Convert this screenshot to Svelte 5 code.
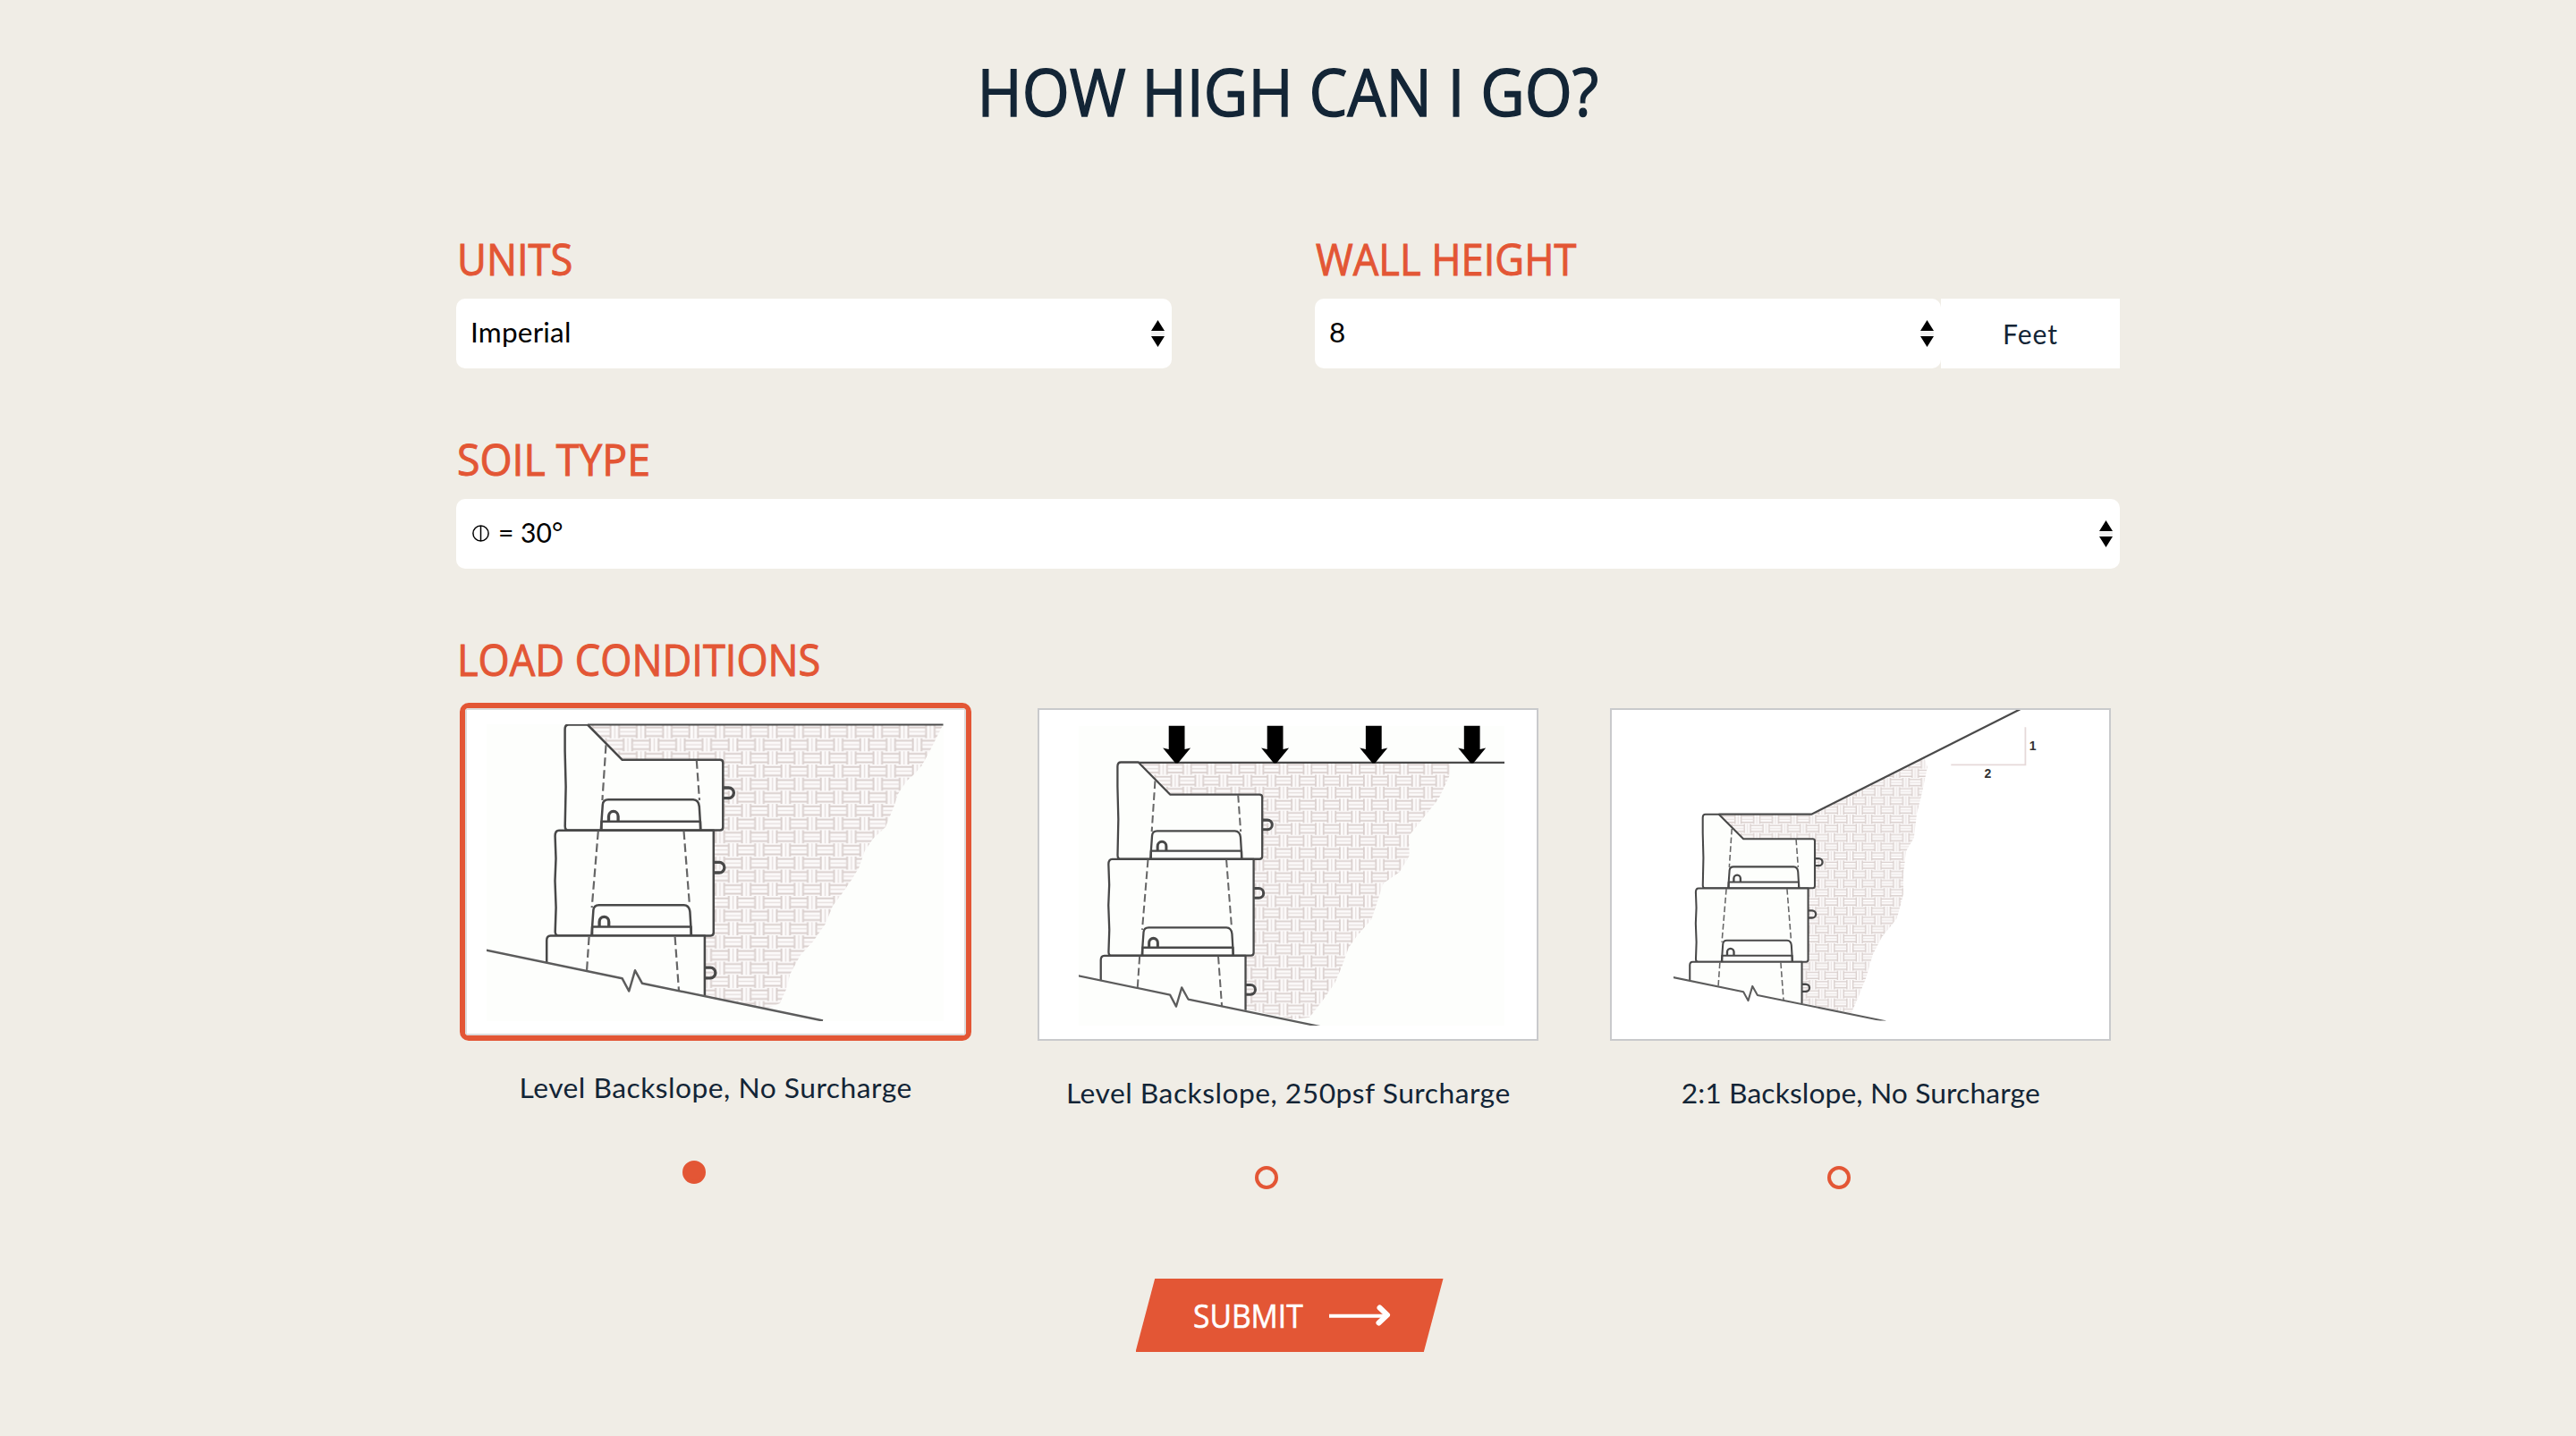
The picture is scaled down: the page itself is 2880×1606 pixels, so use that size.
<script>
  let load = $state('level');

  // Each diagram places the same wall with its own scale, frame and backfill outline.
  const options = [
    {
      id: 'level',
      label: 'Level Backslope, No Surcharge',
      paper: { x: 44, y: 40, w: 511, h: 332 },
      wall: 'matrix(1 0 0 1 0 0)',
      surface: 'M157 40.5H554.5',
      soil: '157,41 554,41 548,53 538.5,72 530,87 522,96 514,103 504,118 499,133 490,155 476,168 466.6,182 460.6,200 452.7,213 441,230 431,243 423,263 409,283 395,298 383,320 379.6,335 372,352 358,358 280,342',
      arrows: [],
      slope: false
    },
    {
      id: 'surcharge',
      label: 'Level Backslope, 250psf Surcharge',
      paper: { x: 66, y: 42, w: 476, h: 335 },
      wall: 'matrix(.9157 0 0 .9165 -11.1 45.4)',
      surface: 'M132.7 82.8H542',
      soil: '132.9,83 481.6,83 480.8,97 468.6,123 452.7,143 435,165 435.7,187 425,205 406.5,218 399.4,240 393.4,258 377.6,276 367.7,290 360.6,310 352,330 338,350 324,367.7 306,370 245,357',
      arrows: [175.6, 285.6, 395.8, 505.7],
      slope: false
    },
    {
      id: 'backslope',
      label: '2:1 Backslope, No Surcharge',
      paper: { x: 91, y: 23, w: 440, h: 348.5 },
      wall: 'matrix(.709 0 0 .699 30.4 112.5)',
      surface: 'M141.7 140.7H245.2L478.5 23.3',
      soil: '142.3,140.7 245.2,140.7 371.7,77.5 374.8,88 369.7,113 363,140 359.8,167 351,182 348,207 348,230 340.8,257 324,278 314,297 306.4,323 298.5,343 289.8,363 230,351',
      arrows: [],
      slope: true
    }
  ];
</script>

{#snippet spinner()}
  <svg class="spinner" viewBox="0 0 15 30" aria-hidden="true">
    <path class="groove" d="M0 12.5H15V17.5H0z" />
    <path d="M7.5 0L15 12H0z M7.5 30L15 18H0z" />
  </svg>
{/snippet}

{#snippet channel()}
  <path d="M171.8 158.3L173.8 130Q174.3 124.3 180 124.3H275Q281 124.5 281.8 132L283.4 158.3" />
  <path d="M172.5 158V148.7H283V158" />
  <path class="loop" d="M180.5 148.5V143a5.3 5.6 0 0 1 10.6 0V148.5" />
{/snippet}

{#snippet hook(x, y)}
  <path class="loop" d="M{x} {y - 5.8}h5.6a5.8 5.8 0 0 1 0 11.6h-5.6" />
{/snippet}

{#snippet diagram(o)}
  <svg
    class="diagram"
    viewBox="20 22 560 {load === o.id ? 366 : 372}"
    role="img"
    aria-label={o.label}
  >
    <defs>
      <pattern
        id="weave-{o.id}"
        width="29.4"
        height="29.4"
        patternUnits="userSpaceOnUse"
        patternTransform="{o.wall} translate(209.3 40.9)"
      >
        <path
          class="weave"
          d="M2.6 0V14.7M12.2 0V14.7 M17.3 14.7V29.4M26.9 14.7V29.4
             M12.5 2.6H29.4M12.5 12.2H29.4 M0 2.6H2.3M0 12.2H2.3
             M0 17.3H17M0 26.9H17 M27 17.3H29.4M27 26.9H29.4"
        />
        <path
          class="weave core"
          d="M7.4 0V14.7M22.1 14.7V29.4 M12.5 7.4H29.4M0 7.4H2.3 M0 22.1H17M27 22.1H29.4"
        />
      </pattern>
      <clipPath id="paper-{o.id}">
        <rect x={o.paper.x} y={o.paper.y} width={o.paper.w} height={o.paper.h} />
      </clipPath>
    </defs>

    <rect class="sheet" x="20" y="22" width="560" height="372" />
    {#if !o.slope}
      <rect class="paper" x={o.paper.x} y={o.paper.y} width={o.paper.w} height={o.paper.h} />
    {/if}
    <polygon class="tint" points={o.soil} />
    <polygon points={o.soil} fill="url(#weave-{o.id})" />

    <g clip-path="url(#paper-{o.id})">
      <g class="wall" class:small={o.slope} transform={o.wall}>
        <path class="block" d="M135.7 40.5H157L195.7 79.8H305Q308.3 79.8 308.3 83V155Q308.3 158.6 305 158.6H135.5Q131.7 158.6 131.7 154L132.6 110L131.6 70V45.5Q131.7 40.5 135.7 40.5z" />
        <path class="block" d="M125 158.8H297.8V273Q297.8 276.4 294.5 276.4H124.5Q120.7 276.4 120.7 272L121.6 245L120.5 215L121.5 190L120.6 165Q120.7 158.8 125 158.8z" />
        <path class="block" d="M287.9 343V276.6H115.5Q111.2 276.6 111.2 282V306.8" />
        <path class="dash" d="M177.5 63.3L173.4 125M278.8 80.3L282 125M168.8 159.5L161.7 245M264.5 159.5L271 243M158.6 277.5L156 316M254.6 277.5L259 338" />
        {@render channel()}
        <g transform="translate(-10.4 117.9)">{@render channel()}</g>
        {@render hook(309, 116.8)}
        {@render hook(298.5, 200.2)}
        {@render hook(288.5, 318)}
        <path class="ground" d="M43.9 292.7L195.7 324.3L203.2 338.5L210 315.3L217.9 329.7L420 371.5" />
      </g>
    </g>
    <path class="surface" d={o.surface} />

    {#each o.arrows as x}
      <path class="arrow" d="M{x - 8.9} 41.7h17.8v26.2l6.6 -1.3L{x + 1.5} 83.5h-3L{x - 15.5} 66.6l6.6 1.3z" />
    {/each}

    {#if o.slope}
      <path class="ratio" d="M401.3 85.3H484.4V43.3" />
      <text x="492.6" y="69.3">1</text>
      <text x="442.4" y="99.6">2</text>
    {/if}
    <rect class="edge" x="21" y="23" width="558" height={load === o.id ? 364 : 370} />
  </svg>
{/snippet}

<main>
  <h1><span>HOW HIGH CAN I GO?</span></h1>

  <form>
    <div class="row">
      <div class="field units">
        <h2>UNITS</h2>
        <div class="select"><span class="value">Imperial</span> {@render spinner()}</div>
      </div>
      <div class="field height">
        <h2>WALL HEIGHT</h2>
        <div class="group">
          <div class="select"><span class="value">8</span> {@render spinner()}</div>
          <div class="unit">Feet</div>
        </div>
      </div>
    </div>

    <div class="field">
      <h2 class="soil-title">SOIL TYPE</h2>
      <div class="select">
        <span class="soil">
          <svg class="phi" viewBox="0 0 19 19" aria-label="phi">
            <circle cx="9.5" cy="9.5" r="8.6" />
            <path d="M9.5 1V18" />
          </svg>
          <span>= 30°</span>
        </span>
        {@render spinner()}
      </div>
    </div>

    <h2>LOAD CONDITIONS</h2>
    <div class="options">
      {#each options as o}
        <label class:selected={load === o.id}>
          <span class="card">{@render diagram(o)}</span>
          <span class="caption {o.id}">{o.label}</span>
          <input type="radio" name="load" value={o.id} bind:group={load} />
        </label>
      {/each}
    </div>

    <button type="button">
      <span>SUBMIT</span>
      <svg class="go" viewBox="0 0 70 26" aria-hidden="true">
        <path class="shaft" d="M0 13.8H62" />
        <path class="tip" d="M56.5 4.5L65 12.6L55.5 21.5" />
      </svg>
    </button>
  </form>
</main>

<style>
  :global(body) {
    background: #f0ede6;
  }

  main {
    box-sizing: border-box;
    min-height: 1606px;
    padding-top: 52px;
    background: #f0ede6;
    color: #132536;
    font: 30px/36px Lato, 'Open Sans', sans-serif;
  }

  h1 {
    margin: 0;
    font: 400 73px/100px 'Open Sans', 'Noto Sans', sans-serif;
    text-align: center;
    -webkit-text-stroke: 1.4px currentColor;
  }

  h1 span {
    display: inline-block;
    transform: scaleX(0.934);
  }

  form {
    width: 1860px;
    margin: 104px auto 0;
  }

  h2 {
    width: max-content;
    margin: 0 0 0 1px;
    color: #e35635;
    font: 400 48.6px/66px 'Open Sans', 'Noto Sans', sans-serif;
    -webkit-text-stroke: 1px currentColor;
    transform: scaleX(0.93);
    transform-origin: left;
  }

  .soil-title {
    transform: scaleX(0.955);
  }

  .row {
    display: flex;
    justify-content: space-between;
  }

  .field {
    margin-bottom: 68px;
  }

  .units {
    width: 800px;
  }

  .height {
    width: 900px;
  }

  .group {
    display: flex;
  }

  .select {
    display: flex;
    flex: 1;
    align-items: center;
    justify-content: space-between;
    box-sizing: border-box;
    height: 78px;
    margin-top: 12px;
    padding: 0 8px 4px 15px;
    border-radius: 10px;
    background: #fff;
    color: #000;
  }

  .value {
    padding-left: 1px;
    transform: scaleX(1.05);
    transform-origin: left;
    letter-spacing: 0.2px;
  }

  .unit {
    width: 200px;
    height: 78px;
    margin-top: 12px;
    background: #fff;
    letter-spacing: 1px;
    line-height: 79px;
    text-align: center;
  }

  .spinner {
    position: relative;
    top: 2px;
    width: 15px;
    height: 30px;
  }

  .groove {
    fill: #f1f1f1;
  }

  .soil {
    display: flex;
    align-items: center;
    gap: 10px;
    padding-left: 3px;
  }

  .phi {
    width: 19px;
    height: 19px;
    margin-top: 3px;
    fill: none;
    stroke: #000;
    stroke-width: 1.5;
  }

  .options {
    display: grid;
    grid-template-columns: repeat(3, 580px);
    gap: 60px;
    margin-top: 16px;
  }

  label {
    display: flex;
    flex-direction: column;
    align-items: center;
    padding-top: 6px;
  }

  .card {
    display: flex;
    box-sizing: border-box;
    width: 560px;
    height: 372px;
  }

  .selected {
    padding-top: 0;
  }

  .selected .card {
    width: 572px;
    height: 378px;
    margin-bottom: -6px;
    border: 6px solid #e35635;
    border-radius: 10px;
    background: #e35635;
  }

  .selected .diagram {
    border-radius: 4px;
  }

  .diagram {
    width: 100%;
    height: 100%;
  }

  .sheet {
    fill: #fff;
  }

  .paper {
    fill: #fdfefc;
  }

  .edge {
    fill: none;
    stroke: #c9cacc;
    stroke-width: 2;
  }

  .selected .edge {
    stroke: #dcdcdc;
  }

  .tint {
    fill: #fcfafa;
  }

  .weave {
    fill: none;
    stroke: #d9cfcd;
    stroke-width: 2;
  }

  .core {
    stroke: #e6dfde;
    stroke-width: 1.5;
  }

  .wall {
    fill: none;
    stroke: #484848;
    stroke-width: 2.5;
    stroke-linejoin: round;
  }

  .small {
    stroke-width: 2.9;
  }

  .block {
    fill: #fdfefc;
  }

  .loop {
    stroke-width: 3.3;
  }

  .dash {
    stroke: #666;
    stroke-width: 2.2;
    stroke-dasharray: 9.5 4.5;
  }

  .ground {
    stroke: #5c5c5c;
  }

  .surface {
    fill: none;
    stroke: #4a4a4a;
    stroke-width: 2.2;
  }

  .arrow {
    fill: #000;
  }

  .ratio {
    fill: none;
    stroke: #e6d9d9;
    stroke-width: 1.8;
  }

  text {
    fill: #333;
    font: 700 14px 'Liberation Sans', sans-serif;
    text-anchor: middle;
  }

  .caption {
    margin-top: 40px;
    white-space: nowrap;
    letter-spacing: 0.45px;
    transform: scaleX(1.06);
  }

  .caption.backslope {
    letter-spacing: 0.1px;
  }

  input {
    appearance: none;
    box-sizing: border-box;
    width: 26px;
    height: 26px;
    margin: 64px 48px 0 0;
    border: 4px solid #e35635;
    border-radius: 50%;
  }

  input:checked {
    background: #e35635;
  }

  button {
    display: flex;
    align-items: center;
    box-sizing: border-box;
    width: 344px;
    height: 82px;
    margin: 100px 0 0 759.5px;
    padding: 0 0 0 64px;
    border: 0;
    background: #e35635;
    clip-path: polygon(6.3% 0, 100% 0, 93.7% 100%, 0 100%);
    color: #fff;
    font: 400 36.5px/50px 'Open Sans', 'Noto Sans', sans-serif;
    -webkit-text-stroke: 0.6px currentColor;
  }

  button span {
    width: 152px;
    text-align: left;
    transform: scaleX(0.92);
    transform-origin: left;
  }

  .go {
    width: 70px;
    height: 26px;
    fill: none;
    stroke: #fff;
  }

  .shaft {
    stroke-width: 4;
  }

  .tip {
    stroke-width: 6;
    stroke-linecap: round;
    stroke-linejoin: round;
  }
</style>
